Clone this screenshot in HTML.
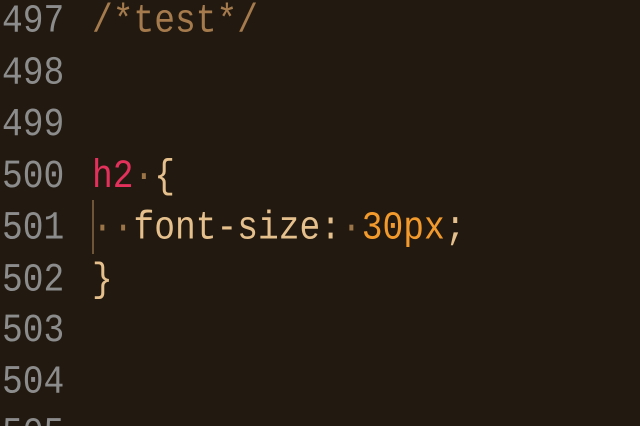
<!DOCTYPE html>
<html><head><style>
html,body{margin:0;padding:0;background:#221a11;width:640px;height:426px;overflow:hidden;position:relative}
.c{position:absolute;left:0;top:-3px;font-family:"Liberation Mono","DejaVu Sans Mono",monospace;font-size:34.6px;line-height:44.9px;white-space:pre;transform:scaleY(1.15);transform-origin:0 0}
.n{position:absolute;left:2px;color:#8c8c8c}
.t{position:absolute;left:92px;color:#e5bf8c}
.cm{color:#a57a4c}.k{color:#e4315c}.o{color:#f39a2c}.d{color:#9b7448}
.g{position:absolute;left:92px;top:200px;width:2px;height:54px;background:#6e5536}
</style></head><body>
<div class="c n">497
498
499
500
501
502
503
504
505</div>
<div class="g"></div>
<div class="c t"><span class="cm">/*test*/</span>


<span class="k">h2</span><span class="d">·</span>{
<span class="d">··</span>font-size:<span class="d">·</span><span class="o">30px</span>;
}</div>
</body></html>
